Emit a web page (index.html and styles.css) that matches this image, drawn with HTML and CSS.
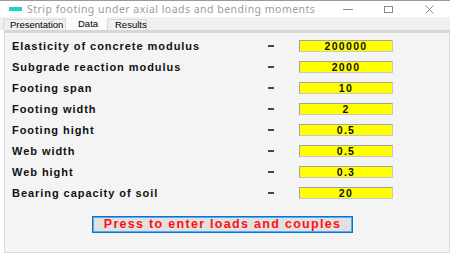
FILE: index.html
```html
<!DOCTYPE html>
<html lang="en">
<head>
  <meta charset="UTF-8">
  <title>Strip footing under axial loads and bending moments</title>
  <link rel="stylesheet" href="styles.css">
</head>
<body>
  <div class="window">
    <div class="titlebar">
      <span class="app_icon"></span>
      <span class="title">Strip footing under axial loads and bending moments</span>
      <div class="controls">
        <span class="ctl"><span class="ctl_min"></span></span>
        <span class="ctl"><span class="ctl_max"></span></span>
        <span class="ctl">
          <svg width="9" height="9" viewBox="0 0 9 9"><path d="M0.5 0.5 L8.5 8.5 M8.5 0.5 L0.5 8.5" stroke="#8a8a8a" stroke-width="1" fill="none"/></svg>
        </span>
      </div>
    </div>
    <div class="tabs">
      <span class="tab">Presentation</span>
      <span class="tab active">Data</span>
      <span class="tab">Results</span>
    </div>
    <div class="panel">
      <div class="form">
        <span class="label">Elasticity of concrete modulus</span><span class="eq"></span><span class="value">200000</span>
        <span class="label">Subgrade reaction modulus</span><span class="eq"></span><span class="value">2000</span>
        <span class="label">Footing span</span><span class="eq"></span><span class="value">10</span>
        <span class="label">Footing width</span><span class="eq"></span><span class="value">2</span>
        <span class="label">Footing hight</span><span class="eq"></span><span class="value">0.5</span>
        <span class="label">Web width</span><span class="eq"></span><span class="value">0.5</span>
        <span class="label">Web hight</span><span class="eq"></span><span class="value">0.3</span>
        <span class="label">Bearing capacity of soil</span><span class="eq"></span><span class="value">20</span>
      </div>
      <div class="actions">
        <button class="enter_btn">Press to enter loads and couples</button>
      </div>
    </div>
  </div>
</body>
</html>
```
FILE: styles.css
```css
*,*:before,*:after{
  box-sizing: border-box;
  margin: 0;
  padding: 0;
}
html,body{
  width: 450px;
  height: 253px;
  overflow: hidden;
  background: #fff;
}
.window{
  height: 253px;
  display: flex;
  flex-direction: column;
  font-family: "Liberation Sans", Arial, sans-serif;
}
.titlebar{
  height: 17px;
  display: flex;
  align-items: center;
  border-top: 1px solid #9a9a9a;
  padding-left: 9px;
  background: #fff;
}
.app_icon{
  width: 13px;
  height: 4px;
  background: #20d0d0;
  margin-right: 5px;
}
.title{
  font-family: "Noto Sans", sans-serif;
  font-size: 10.5px;
  letter-spacing: 0.48px;
  color: #9c9c9c;
  white-space: nowrap;
}
.controls{
  margin-left: auto;
  display: flex;
  height: 100%;
}
.ctl{
  width: 41px;
  display: flex;
  align-items: center;
  justify-content: center;
}
.ctl_min{
  width: 10px;
  height: 1px;
  background: #8a8a8a;
}
.ctl_max{
  width: 9px;
  height: 7px;
  border: 1px solid #8a8a8a;
}
.tabs{
  height: 13px;
  background: #f0f0f0;
  display: flex;
  align-items: flex-end;
  padding-left: 3px;
}
.tab{
  height: 11px;
  font-size: 9.5px;
  line-height: 10px;
  color: #000;
  padding: 0 6px;
  border: 1px solid #d9d9d9;
  border-bottom: none;
  background: #f0f0f0;
}
.tab:first-child{
  width: 63px;
  padding-left: 6px;
}
.tab.active{
  width: 41px;
  height: 13px;
  padding-left: 11px;
  line-height: 11px;
  background: #fbfbfb;
  border-color: #fbfbfb;
}
.tab:last-child{
  width: 40px;
  padding-left: 7px;
}
.panel{
  flex: 1;
  margin-left: 4px;
  background: #f4f4f4;
  border-top: 3px solid #d6d6d6;
  border-left: 1px solid #dadada;
  border-right: 1px solid #dadada;
  border-bottom: 1px solid #dadada;
}
.form{
  display: grid;
  grid-template-columns: 256px 31px 94px;
  grid-auto-rows: 21px;
  align-items: center;
  padding: 2px 0 0 7px;
}
.label{
  font-size: 11px;
  font-weight: bold;
  letter-spacing: 0.95px;
  color: #111;
  white-space: nowrap;
}
.eq{
  width: 6px;
  height: 2px;
  background: #444;
}
.value{
  height: 12px;
  background: #ffff00;
  border: 1px solid #a4a4a4;
  border-right-color: #c8c8c8;
  border-bottom-color: #c8c8c8;
  font-size: 10.5px;
  font-weight: bold;
  letter-spacing: 1.3px;
  line-height: 10px;
  text-align: center;
  color: #111;
}
.actions{
  padding: 11px 0 0 87px;
}
.enter_btn{
  width: 261px;
  height: 17px;
  background: #e1e1e1;
  border: 1px solid #0078d7;
  box-shadow: inset 0 0 0 1px #5aa6e8;
  font-family: "Liberation Sans", Arial, sans-serif;
  font-size: 12.5px;
  font-weight: bold;
  letter-spacing: 1.3px;
  color: #ff1010;
  line-height: 14px;
}
```
